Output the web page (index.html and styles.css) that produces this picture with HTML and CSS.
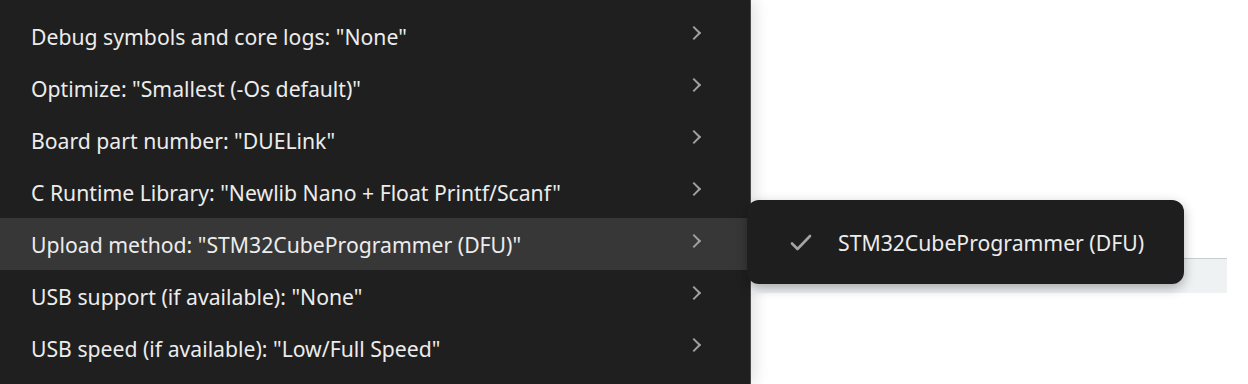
FILE: index.html
```html
<!DOCTYPE html>
<html>
  <head>
    <title>Board options</title>
    <link rel="stylesheet" href="styles.css">
  </head>
  <body>
    <div class="screen">
      <ul class="menu">
        <li class="menu-item">Debug symbols and core logs: "None"<span class="chevron"></span></li>
        <li class="menu-item">Optimize: "Smallest (-Os default)"<span class="chevron"></span></li>
        <li class="menu-item">Board part number: "DUELink"<span class="chevron"></span></li>
        <li class="menu-item">C Runtime Library: "Newlib Nano + Float Printf/Scanf"<span class="chevron"></span></li>
        <li class="menu-item active">Upload method: "STM32CubeProgrammer (DFU)"<span class="chevron"></span></li>
        <li class="menu-item">USB support (if available): "None"<span class="chevron"></span></li>
        <li class="menu-item">USB speed (if available): "Low/Full Speed"<span class="chevron"></span></li>
      </ul>
      <div class="editor">
        <div class="band"></div>
      </div>
      <div class="submenu">
        <div class="submenu-item">
          <svg class="check" width="22" height="18" viewBox="0 0 22 18">
            <path d="M2 10.5 L7.5 16 L20 3" fill="none" stroke="#a3a3a3" stroke-width="2.6" stroke-linecap="round" stroke-linejoin="round"/>
          </svg>
          STM32CubeProgrammer (DFU)
        </div>
      </div>
    </div>
  </body>
</html>
```

FILE: styles.css
```css
body {
  margin: 0;
  background: #ffffff;
  font-family: "Noto Sans", sans-serif;
}
.screen {
  position: relative;
  display: flex;
  height: 384px;
  overflow: hidden;
}
.menu {
  width: 750px;
  margin: 0;
  padding: 10px 0 0 0;
  list-style: none;
  background: #1f1f1f;
  border-right: 1px solid #4a4a4a;
  box-shadow: 4px 0 14px rgba(0, 0, 0, 0.12);
  flex-shrink: 0;
}
.menu-item {
  display: flex;
  align-items: center;
  justify-content: space-between;
  height: 52px;
  padding: 0 48px 0 31px;
  color: #ececec;
  font-size: 21.2px;
}
.menu-item.active {
  background: #373737;
}
.chevron {
  width: 8px;
  height: 8px;
  margin-right: 3px;
  margin-top: -6px;
  border-top: 2px solid #a0a0a0;
  border-right: 2px solid #a0a0a0;
  transform: rotate(45deg);
}
.editor {
  flex: 1;
  padding-top: 258px;
}
.band {
  width: 476px;
  height: 34px;
  background: #eef2f2;
  border-top: 1px solid #c9cccc;
}
.submenu {
  position: absolute;
  left: 747px;
  top: 200px;
  width: 437px;
  height: 84px;
  background: #1e1e1e;
  border-radius: 12px;
  box-shadow: 0 4px 12px rgba(0, 0, 0, 0.3);
  display: flex;
  align-items: center;
}
.submenu-item {
  display: flex;
  align-items: center;
  color: #ececec;
  font-size: 21.2px;
  padding-left: 43px;
}
.check {
  margin-right: 26px;
}
```
